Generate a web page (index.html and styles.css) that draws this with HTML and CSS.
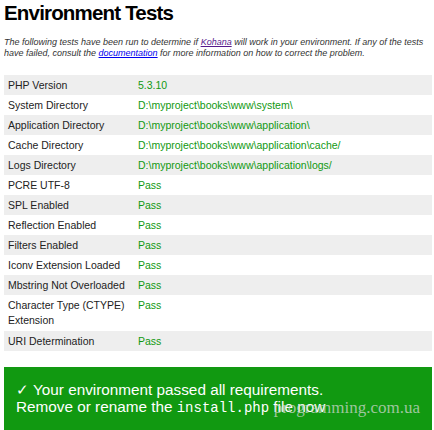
FILE: index.html
```html
<!DOCTYPE html>
<html lang="en">
  <head>
    <meta charset="UTF-8" />
    <title>Kohana Installation</title>
    <link rel="stylesheet" href="styles.css">
  </head>
  <body>
    <h1>Environment Tests</h1>
    <p>
      The following tests have been run to determine if <a href="#" class="visited">Kohana</a> will work in your environment.
      If any of the tests have failed, consult the <a href="#">documentation</a>
      for more information on how to correct the problem.
    </p>

    <table>
      <tr><th>PHP Version</th><td class="pass">5.3.10</td></tr>
      <tr><th>System Directory</th><td class="pass">D:\myproject\books\www\system\</td></tr>
      <tr><th>Application Directory</th><td class="pass">D:\myproject\books\www\application\</td></tr>
      <tr><th>Cache Directory</th><td class="pass">D:\myproject\books\www\application\cache/</td></tr>
      <tr><th>Logs Directory</th><td class="pass">D:\myproject\books\www\application\logs/</td></tr>
      <tr><th>PCRE UTF-8</th><td class="pass">Pass</td></tr>
      <tr><th>SPL Enabled</th><td class="pass">Pass</td></tr>
      <tr><th>Reflection Enabled</th><td class="pass">Pass</td></tr>
      <tr><th>Filters Enabled</th><td class="pass">Pass</td></tr>
      <tr><th>Iconv Extension Loaded</th><td class="pass">Pass</td></tr>
      <tr><th>Mbstring Not Overloaded</th><td class="pass">Pass</td></tr>
      <tr><th class="tall">Character Type (CTYPE) Extension</th><td class="pass">Pass</td></tr>
      <tr><th>URI Determination</th><td class="pass">Pass</td></tr>
    </table>

    <div id="results" class="pass">
      <span class="watermark">programming.com.ua</span>
      ✓ Your environment passed all requirements.<br />
      Remove or rename the <code>install.php</code> file now
    </div>
  </body>
</html>
```

FILE: styles.css
```css
body {
  margin: 0 2px 0 4px;
  font-family: "Liberation Sans", Arial, sans-serif;
  background: #fff;
  font-size: 10.5px;
}

h1 {
  margin: 0;
  font-size: 20.5px;
  line-height: 26px;
  letter-spacing: -0.04em;
  color: #000;
}

h1 + p {
  margin: 11px 0 17px;
  color: #333;
  font-size: 9px;
  line-height: 10.5px;
  font-style: italic;
}

a {
  color: #0000ee;
}

a.visited {
  color: #551a8b;
}

code {
  font-family: "Liberation Mono", monospace;
  font-size: 14px;
  font-weight: normal;
}

table {
  border-collapse: collapse;
  table-layout: fixed;
  width: 100%;
}

table th,
table td {
  padding: 3px 4px;
  line-height: 14px;
  text-align: left;
  vertical-align: top;
}

table th {
  width: 122px;
  font-weight: normal;
  color: #222;
}

table th.tall {
  line-height: 15px;
}

table tr:nth-child(odd) {
  background: #eee;
}

table td.pass {
  color: #191;
}

#results {
  position: relative;
  margin-top: 16px;
  padding: 14px 12px 20px;
  color: #fff;
  font-size: 15.3px;
  line-height: 17px;
  background: #191;
}

.watermark {
  position: absolute;
  right: 12px;
  top: 32px;
  font-family: "Liberation Serif", serif;
  font-size: 17px;
  color: rgba(205, 215, 205, 0.75);
}
```
